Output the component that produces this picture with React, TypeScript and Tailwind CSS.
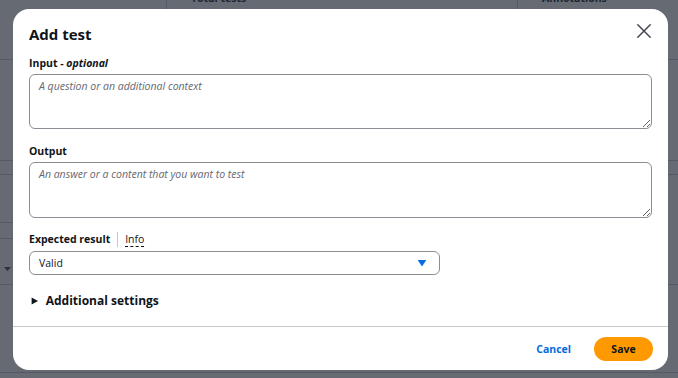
import React from "react";

export default function App() {
  return (
    <div className="relative w-[678px] h-[378px] overflow-hidden bg-white font-['Open_Sans','Helvetica_Neue',Arial,sans-serif] text-[#0f141a]">
      {/* page behind the modal */}
      <div className="flex flex-col w-full h-full">
        <div className="flex h-[60px] shrink-0 border-b border-[#c6c6cd]">
          <div className="w-[166px] shrink-0" />
          <div className="w-[351px] shrink-0 border-l border-[#c6c6cd] pl-[24px]">
            <div className="-mt-[8.6px] text-[10.5px] leading-[15px] font-bold">Total tests</div>
          </div>
          <div className="flex-1 border-l border-[#c6c6cd] pl-[24px]">
            <div className="-mt-[8.6px] text-[10.5px] leading-[15px] font-bold">Annotations</div>
          </div>
        </div>
        <div className="h-[101px] shrink-0 border-b border-[#c6c6cd]" />
        <div className="h-[14px] shrink-0 border-b border-[#c6c6cd]" />
        <div className="flex h-[110px] shrink-0 border-b border-[#c6c6cd]">
          <div className="w-[20px] flex flex-col">
            <div className="h-[48px] border-b border-[#c6c6cd]" />
            <div className="h-[16px] border-b border-[#c6c6cd]" />
            <div className="pt-[28px] pl-[4px]">
              <svg width="7" height="4" viewBox="0 0 7 4">
                <polygon points="0,0 7,0 3.5,4" fill="#424650" />
              </svg>
            </div>
          </div>
          <div className="flex-1" />
        </div>
        <div className="h-[88px] shrink-0 border-b border-[#c6c6cd]" />
      </div>

      {/* overlay */}
      <div className="absolute inset-0 bg-[rgba(35,43,55,0.7)]" />

      {/* modal */}
      <div className="absolute left-[13px] top-[9px] w-[655px] h-[361px] bg-white rounded-[16px] flex flex-col">
        <div className="flex items-start justify-between pl-4 pr-4 pt-[16px]">
          <h2 className="text-[15px] leading-[18px] font-bold">Add test</h2>
          <button className="-mt-[2px] w-4 h-4 flex items-center justify-center">
            <svg width="16" height="16" viewBox="0 0 16 16" fill="none">
              <path d="M1.8 1.8 L14.2 14.2 M14.2 1.8 L1.8 14.2" stroke="#424650" strokeWidth="1.5" strokeLinecap="round" />
            </svg>
          </button>
        </div>

        <div className="px-4 flex flex-col">
          <label className="mt-[13px] text-[10.5px] leading-[15px] font-bold">
            Input - <i>optional</i>
          </label>
          <textarea
            className="mt-[2.6px] h-[55px] w-full border border-[#8c8c94] rounded-[6px] px-[9px] pt-[4.5px] pb-[3px] text-[10.5px] leading-[15px] placeholder:italic placeholder:text-[#656871] outline-none"
            placeholder="A question or an additional context"
          />

          <label className="mt-[15px] text-[10.5px] leading-[15px] font-bold">Output</label>
          <textarea
            className="mt-[3.3px] h-[56.5px] w-full border border-[#8c8c94] rounded-[6px] px-[9px] pt-[4.5px] pb-[3px] text-[10.5px] leading-[15px] placeholder:italic placeholder:text-[#656871] outline-none"
            placeholder="An answer or a content that you want to test"
          />

          <div className="mt-[14px] flex items-center h-[15px] text-[10.5px] leading-[15px]">
            <span className="font-bold">Expected result</span>
            <span className="mx-[7px] w-px h-[15px] bg-[#c6c6cd]" />
            <span className="underline decoration-dashed underline-offset-[3px] decoration-[#0f141a]">Info</span>
          </div>

          <div className="mt-[3.7px] w-[411px] h-[24px] border border-[#8c8c94] rounded-[6px] flex items-center justify-between pl-[9px] pr-[13px] text-[10.5px] leading-[15px]">
            <span>Valid</span>
            <svg width="8" height="6" viewBox="0 0 8 6">
              <polygon points="0,0 8,0 4,6" fill="#006ce0" strokeLinejoin="round" stroke="#006ce0" strokeWidth="0.6" />
            </svg>
          </div>

          <div className="mt-[17.5px] flex items-center h-[16px]">
            <svg width="12" height="12" viewBox="0 0 12 12" className="shrink-0">
              <polygon points="2.6,2.6 9,6 2.6,9.4" fill="#0f141a" />
            </svg>
            <span className="ml-[4.7px] text-[12px] leading-[16px] font-bold">Additional settings</span>
          </div>
        </div>

        <div className="flex-1" />

        <div className="border-t border-[#c6c6cd] h-[44px] flex items-start justify-end pt-[10px] pr-[15px] gap-[23px]">
          <button className="h-[24px] flex items-center text-[10.5px] leading-[15px] font-bold text-[#006ce0]">Cancel</button>
          <button className="h-[24px] w-[59px] rounded-full bg-[#ff9900] flex items-center justify-center text-[10.5px] leading-[15px] font-bold text-[#0f141a]">Save</button>
        </div>
      </div>
    </div>
  );
}
